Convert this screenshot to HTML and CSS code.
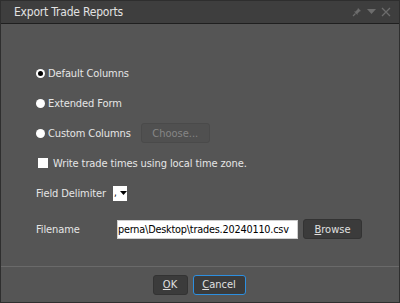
FILE: index.html
```html
<!DOCTYPE html>
<html lang="en">
<head>
  <meta charset="UTF-8" />
  <title>Export Trade Reports</title>
  <link rel="stylesheet" href="styles.css">
</head>
<body>

<div class="dialog">
  <!-- Title bar -->
  <div class="titlebar">
    <span class="title">Export Trade Reports</span>
    <div class="title-tools">
      <svg width="10" height="10" viewBox="0 0 10 10">
        <path d="M6 1 L9 4 L7.5 4.5 L5.5 6.5 L5.5 8 L2 4.5 L3.5 4.5 L5.5 2.5 Z" fill="#6c6c6c"/>
        <line x1="1" y1="9" x2="3.5" y2="6.5" stroke="#6c6c6c" stroke-width="1.2"/>
      </svg>
      <svg width="9" height="6" viewBox="0 0 9 6">
        <path d="M0 0 L9 0 L4.5 5 Z" fill="#6c6c6c"/>
      </svg>
      <svg width="10" height="10" viewBox="0 0 10 10">
        <path d="M1 1 L9 9 M9 1 L1 9" stroke="#6c6c6c" stroke-width="1.3"/>
      </svg>
    </div>
  </div>

  <!-- Options -->
  <div class="content">
    <div class="row">
      <span class="radio checked"></span>
      <span>Default Columns</span>
    </div>
    <div class="row">
      <span class="radio"></span>
      <span>Extended Form</span>
    </div>
    <div class="row">
      <span class="radio"></span>
      <span>Custom Columns</span>
      <button class="btn choose" disabled>Choose...</button>
    </div>
    <div class="row">
      <span class="check"></span>
      <span>Write trade times using local time zone.</span>
    </div>
    <div class="row">
      <span class="label">Field Delimiter</span>
      <div class="combo">
        <span class="combo-val">,</span>
        <svg width="7" height="4" viewBox="0 0 7 4"><path d="M0 0 L7 0 L3.5 4 Z" fill="#000"/></svg>
      </div>
    </div>
    <div class="row file-row">
      <span class="label">Filename</span>
      <div class="file-input">perna\Desktop\trades.20240110.csv</div>
      <button class="btn browse"><u>B</u>rowse</button>
    </div>
  </div>

  <!-- Footer -->
  <div class="footer">
    <button class="btn ok"><u>O</u>K</button>
    <button class="btn cancel"><u>C</u>ancel</button>
  </div>
</div>

</body>
</html>
```

FILE: styles.css
```css
body {
  margin: 0;
  font-family: "DejaVu Sans Condensed", "DejaVu Sans", sans-serif;
  font-size: 11px;
  letter-spacing: -0.1px;
  color: #e6e6e6;
  background: #2c2c2c;
}

.dialog {
  width: 398px;
  height: 301px;
  border: 1px solid #2e2e2e;
  background: #555555;
  display: flex;
  flex-direction: column;
}

.titlebar {
  height: 22px;
  background: #3e3e3e;
  border-bottom: 1px solid #1f1f1f;
  display: flex;
  align-items: center;
  padding: 0 8px 0 13px;
}

.title {
  font-size: 12px;
  letter-spacing: -0.2px;
  color: #e2e2e2;
  flex: 1;
}

.title-tools {
  display: flex;
  align-items: center;
  gap: 5px;
}

.content {
  flex: 1;
  padding: 34px 0 0 35px;
}

.row {
  height: 30px;
  display: flex;
  align-items: center;
}

.radio {
  width: 9px;
  height: 9px;
  border-radius: 50%;
  background: #ffffff;
  margin-right: 3px;
  display: flex;
  align-items: center;
  justify-content: center;
}

.radio.checked::after {
  content: "";
  width: 5px;
  height: 5px;
  border-radius: 50%;
  background: #000;
}

.check {
  width: 10px;
  height: 10px;
  background: #ffffff;
  margin: 0 5px 0 2px;
}

.label {
  width: 77px;
}

.row.file-row {
  margin-top: 6px;
}

.combo {
  width: 14px;
  height: 15px;
  background: #ffffff;
  display: flex;
  align-items: center;
  color: #000;
  font-size: 10px;
}

.combo-val {
  width: 6px;
  padding-left: 1px;
  line-height: 10px;
}

.file-input {
  width: 179px;
  height: 17px;
  margin-left: 4px;
  background: #ffffff;
  color: #000;
  border: 1px solid #cfcfcf;
  line-height: 17px;
  font-size: 10.8px;
  letter-spacing: -0.2px;
  white-space: nowrap;
  overflow: hidden;
}

.btn {
  font-family: inherit;
  font-size: 11px;
  color: #e0e0e0;
  background: #3b3b3b;
  border: 1px solid #333;
  border-radius: 3px;
  height: 20px;
  padding: 0;
}

.choose {
  width: 69px;
  margin-left: 10px;
  background: #505050;
  border-color: #4a4a4a;
  color: #868686;
}

.browse {
  width: 59px;
  margin-left: 5px;
}

.footer {
  height: 35px;
  border-top: 1px solid #6a6a6a;
  display: flex;
  align-items: center;
  justify-content: center;
  gap: 5px;
  padding-right: 2px;
}

.ok {
  width: 35px;
}

.cancel {
  width: 53px;
  border: 1px solid #2d8fe0;
}
```
